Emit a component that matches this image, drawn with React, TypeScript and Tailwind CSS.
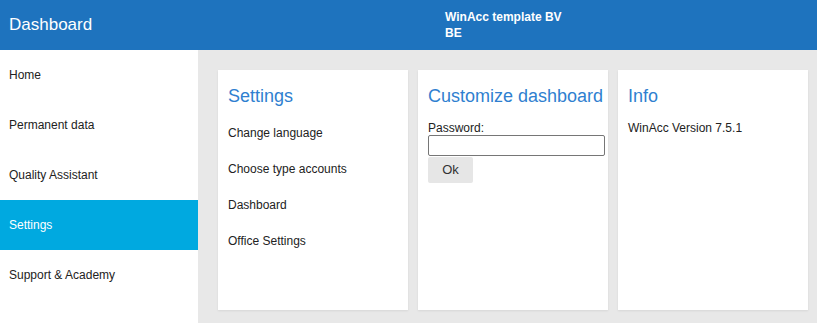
import React from 'react';

const NAV_ITEMS = ['Home', 'Permanent data', 'Quality Assistant', 'Settings', 'Support & Academy'];
const SETTINGS_LINKS = ['Change language', 'Choose type accounts', 'Dashboard', 'Office Settings'];

export default function App() {
  return (
    <div className="h-[323px] w-[817px] overflow-hidden bg-[#e8e8e8] font-['Liberation_Sans',Arial,sans-serif] text-[#333]">
      {/* Top bar */}
      <header className="flex h-[50px] items-center bg-[#1e73be] text-white">
        <div className="w-[445px] pl-[9px] text-[17px]">Dashboard</div>
        <div className="flex flex-col text-[12px] font-bold leading-[16px]">
          <span>WinAcc template BV</span>
          <span>BE</span>
        </div>
      </header>

      <div className="flex h-[273px]">
        {/* Sidebar */}
        <nav className="w-[198px] bg-white">
          {NAV_ITEMS.map((item) => (
            <div
              key={item}
              className={`flex h-[50px] items-center pl-[9px] text-[12px] ${item === 'Settings' ? 'bg-[#00a9e0] text-white' : 'text-[#222]'}`}
            >
              {item}
            </div>
          ))}
        </nav>

        {/* Cards */}
        <main className="flex gap-[10px] pl-[20px] pt-[20px]">
          <section className="h-[240px] w-[190px] bg-white px-[10px] pt-[16px] shadow-[0_1px_2px_rgba(0,0,0,0.08)]">
            <h2 className="text-[18px] leading-[20px] text-[#2f7fd0]">Settings</h2>
            <ul className="mt-[20px] flex flex-col gap-[22px] text-[12px] leading-[14px] text-[#222]">
              {SETTINGS_LINKS.map((link) => (
                <li key={link}>{link}</li>
              ))}
            </ul>
          </section>

          <section className="h-[240px] w-[190px] bg-white px-[10px] pt-[16px] shadow-[0_1px_2px_rgba(0,0,0,0.08)]">
            <h2 className="whitespace-nowrap text-[18px] leading-[20px] text-[#2f7fd0]">Customize dashboard</h2>
            <label className="mt-[15px] block text-[12px] leading-[14px] text-[#222]">Password:</label>
            <input
              type="password"
              className="block h-[21px] w-[177px] rounded-[2px] border border-[#767676] bg-white"
            />
            <button className="mt-[1px] h-[26px] w-[45px] rounded-[2px] bg-[#e6e6e6] text-[13px] text-[#333]">
              Ok
            </button>
          </section>

          <section className="h-[240px] w-[190px] bg-white px-[10px] pt-[16px] shadow-[0_1px_2px_rgba(0,0,0,0.08)]">
            <h2 className="text-[18px] leading-[20px] text-[#2f7fd0]">Info</h2>
            <p className="mt-[15px] text-[12px] leading-[14px] text-[#222]">WinAcc Version 7.5.1</p>
          </section>
        </main>
      </div>
    </div>
  );
}
